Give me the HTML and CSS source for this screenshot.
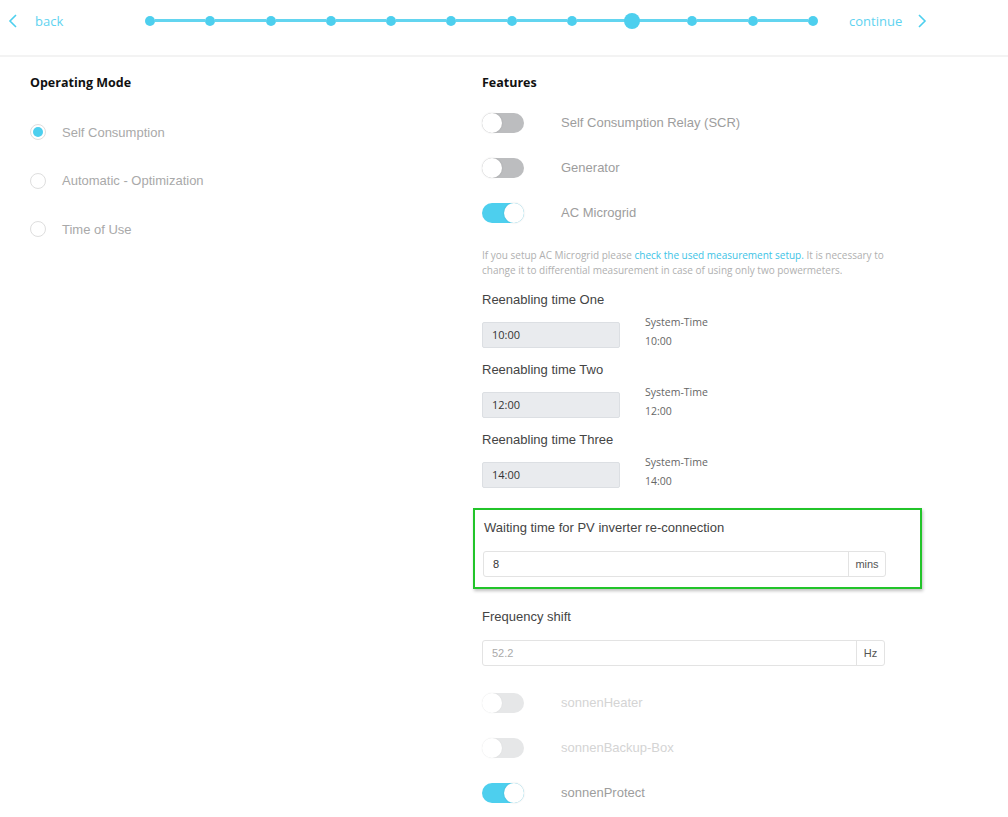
FILE: index.html
```html
<!DOCTYPE html>
<html lang="en">
<head>
  <meta charset="UTF-8">
  <meta name="viewport" content="width=device-width, initial-scale=1.0">
  <title>Setup - Operating Mode</title>
  <link rel="stylesheet" href="styles.css">
</head>
<body>

<div class="top-bar">
  <a class="nav-link back-link" href="#">
    <svg width="10" height="14" viewBox="0 0 10 14"><path d="M8 1 L2 7 L8 13" fill="none" stroke="#4dcfee" stroke-width="1.6"/></svg>
    <span>back</span>
  </a>
  <div class="stepper">
    <span class="step"></span><span class="bar"></span>
    <span class="step"></span><span class="bar"></span>
    <span class="step"></span><span class="bar"></span>
    <span class="step"></span><span class="bar"></span>
    <span class="step"></span><span class="bar"></span>
    <span class="step"></span><span class="bar"></span>
    <span class="step"></span><span class="bar"></span>
    <span class="step"></span><span class="bar"></span>
    <span class="step current"></span><span class="bar"></span>
    <span class="step"></span><span class="bar"></span>
    <span class="step"></span><span class="bar"></span>
    <span class="step"></span>
  </div>
  <a class="nav-link continue-link" href="#">
    <span>continue</span>
    <svg width="10" height="14" viewBox="0 0 10 14"><path d="M2 1 L8 7 L2 13" fill="none" stroke="#4dcfee" stroke-width="1.6"/></svg>
  </a>
</div>

<div class="content">
  <!-- Operating mode -->
  <div class="col-left">
    <div class="section-title">Operating Mode</div>
    <label class="radio-row"><span class="radio checked"></span>Self Consumption</label>
    <label class="radio-row"><span class="radio"></span>Automatic - Optimization</label>
    <label class="radio-row"><span class="radio"></span>Time of Use</label>
  </div>

  <!-- Features -->
  <div class="col-right">
    <div class="section-title">Features</div>
    <div class="toggle-list">
      <div class="toggle-row"><span class="toggle"></span>Self Consumption Relay (SCR)</div>
      <div class="toggle-row"><span class="toggle"></span>Generator</div>
      <div class="toggle-row"><span class="toggle on"></span>AC Microgrid</div>
    </div>

    <p class="hint">If you setup AC Microgrid please <a href="#">check the used measurement setup.</a> It is necessary to<br>change it to differential measurement in case of using only two powermeters.</p>

    <div class="time-groups">
      <div class="time-group">
        <div class="field-label">Reenabling time One</div>
        <div class="time-row">
          <div class="time-input">10:00</div>
          <div class="sys-time"><div>System-Time</div><div>10:00</div></div>
        </div>
      </div>
      <div class="time-group">
        <div class="field-label">Reenabling time Two</div>
        <div class="time-row">
          <div class="time-input">12:00</div>
          <div class="sys-time"><div>System-Time</div><div>12:00</div></div>
        </div>
      </div>
      <div class="time-group">
        <div class="field-label">Reenabling time Three</div>
        <div class="time-row">
          <div class="time-input">14:00</div>
          <div class="sys-time"><div>System-Time</div><div>14:00</div></div>
        </div>
      </div>
    </div>

    <div class="highlight">
      <div class="field-label">Waiting time for PV inverter re-connection</div>
      <div class="input-group">
        <div class="input-value">8</div>
        <div class="addon">mins</div>
      </div>
    </div>

    <div class="field-label freq-label">Frequency shift</div>
    <div class="input-group">
      <div class="input-value placeholder">52.2</div>
      <div class="addon addon-hz">Hz</div>
    </div>

    <div class="toggle-list bottom-toggles">
      <div class="toggle-row disabled"><span class="toggle"></span>sonnenHeater</div>
      <div class="toggle-row disabled"><span class="toggle"></span>sonnenBackup-Box</div>
      <div class="toggle-row"><span class="toggle on"></span>sonnenProtect</div>
    </div>
  </div>
</div>

</body>
</html>
```

FILE: styles.css
```css
body {
  margin: 0;
  padding: 0;
  font-family: "Liberation Sans", Arial, sans-serif;
  background: #fff;
  overflow: hidden;
}

/* Top navigation */
.top-bar {
  display: flex;
  align-items: center;
  height: 41px;
  padding-bottom: 14px;
  border-bottom: 2px solid #f3f3f3;
}

.nav-link {
  display: flex;
  align-items: center;
  color: #5fd3f0;
  text-decoration: none;
  font-family: "Open Sans", sans-serif;
  font-size: 13px;
}

.back-link {
  margin-left: 8px;
  width: 137px;
}

.back-link span {
  margin-left: 17px;
}

.continue-link {
  margin-left: 31px;
}

.continue-link span {
  margin-right: 15px;
}

.stepper {
  display: flex;
  align-items: center;
  width: 673px;
}

.step {
  width: 10px;
  height: 10px;
  border-radius: 50%;
  background: #4dcfee;
  flex-shrink: 0;
}

.step.current {
  width: 16px;
  height: 16px;
  margin: 0 -3px;
  position: relative;
}

.bar {
  flex: 1;
  height: 3px;
  background: #63d5f0;
}

/* Content */
.content {
  display: grid;
  grid-template-columns: 482px 1fr;
  padding-top: 18px;
}

.col-left {
  padding-left: 30px;
}

.section-title {
  font-family: "Open Sans", sans-serif;
  font-weight: bold;
  font-size: 12.5px;
  line-height: 16px;
  color: #111;
}

.col-left .section-title {
  margin-bottom: 17px;
}

.radio-row {
  display: flex;
  align-items: center;
  height: 48.5px;
  font-size: 13px;
  color: #a9a9a9;
}

.radio {
  box-sizing: border-box;
  width: 16px;
  height: 16px;
  border: 1px solid #dedede;
  border-radius: 50%;
  margin-right: 16px;
  display: flex;
  align-items: center;
  justify-content: center;
}

.radio.checked::after {
  content: "";
  width: 10px;
  height: 10px;
  border-radius: 50%;
  background: #4dcfee;
}

/* Toggles */
.toggle-list {
  margin-top: 9px;
}

.toggle-row {
  display: flex;
  align-items: center;
  height: 45px;
  font-size: 13px;
  color: #9d9d9d;
}

.toggle {
  position: relative;
  width: 42px;
  height: 20px;
  border-radius: 10px;
  background: #bcbdbf;
  margin-right: 37px;
}

.toggle::after {
  content: "";
  position: absolute;
  top: 0;
  left: 0;
  width: 20px;
  height: 20px;
  border-radius: 50%;
  background: #fff;
  box-shadow: 0 0 2px rgba(0, 0, 0, 0.15);
}

.toggle.on {
  background: #4dcfee;
}

.toggle.on::after {
  left: 22px;
}

.toggle-row.disabled {
  color: #d4d4d4;
}

.toggle-row.disabled .toggle {
  background: #e6e7e8;
}

.toggle-row.disabled .toggle::after {
  box-shadow: 0 0 2px rgba(0, 0, 0, 0.06);
}

.bottom-toggles {
  margin-top: 14px;
}

.hint {
  margin: 13px 0 0;
  max-width: 420px;
  font-family: "Open Sans", sans-serif;
  font-size: 10px;
  line-height: 15px;
  color: #b0b0b0;
}

.hint a {
  color: #3dc3e6;
  text-decoration: none;
}

/* Fields */
.field-label {
  font-size: 13px;
  line-height: 16px;
  color: #444;
}

.time-groups {
  display: flex;
  flex-direction: column;
  gap: 11px;
  margin-top: 14px;
}

.time-row {
  display: flex;
  margin-top: 5px;
}

.time-input {
  box-sizing: border-box;
  width: 138px;
  height: 26px;
  margin-top: 9px;
  padding-left: 9px;
  line-height: 24px;
  background: #e9ebee;
  border: 1px solid #dcdfe3;
  border-radius: 2px;
  font-family: "Open Sans", sans-serif;
  font-size: 11px;
  color: #333;
}

.sys-time {
  margin-left: 25px;
  font-family: "Open Sans", sans-serif;
  font-size: 10.5px;
  line-height: 19px;
  color: #666;
}

.highlight {
  width: 430px;
  margin: 17px 0 0 -9px;
  padding: 10px 7px 10px 8px;
  border: 2px solid #22c42a;
  box-shadow: 1px 2px 3px rgba(0, 0, 0, 0.25);
}

.highlight .field-label {
  margin-left: 1px;
  margin-bottom: 15px;
}

.input-group {
  display: flex;
  width: 403px;
  height: 26px;
  box-sizing: border-box;
  border: 1px solid #e3e3e3;
  border-radius: 3px;
  font-size: 11px;
}

.input-value {
  flex: 1;
  padding-left: 9px;
  line-height: 24px;
  color: #333;
}

.input-value.placeholder {
  color: #aaa;
}

.addon {
  width: 36px;
  border-left: 1px solid #e3e3e3;
  text-align: center;
  line-height: 24px;
  color: #555;
}

.addon-hz {
  width: 27px;
}

.freq-label {
  margin: 20px 0 15px;
}
```
